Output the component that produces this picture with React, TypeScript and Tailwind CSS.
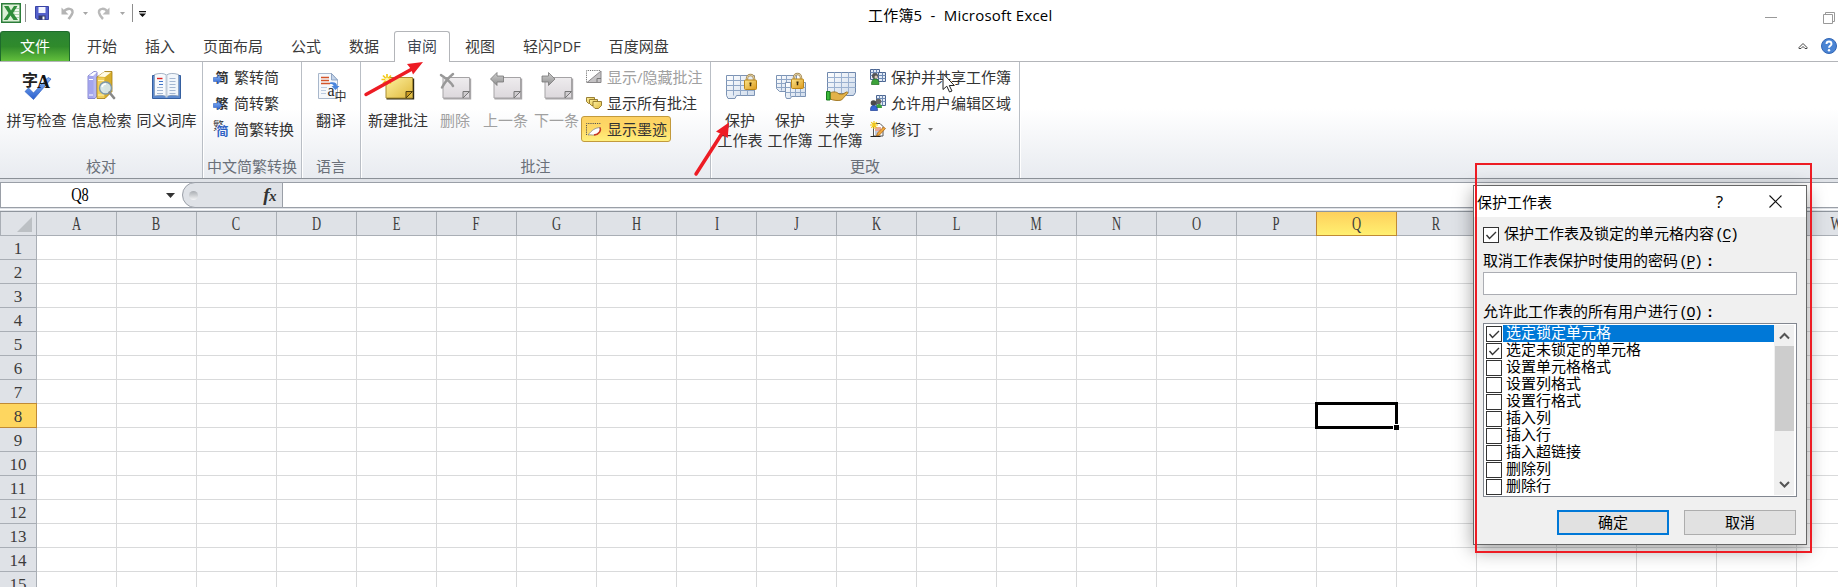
import React from "react";

type Kids = { children?: React.ReactNode };

const ui = "font-['Open_Sans','Noto_Sans_CJK_SC',sans-serif]";
const song = "font-['Liberation_Serif','Noto_Sans_CJK_SC',serif]";

const Big = ({ children }: Kids) => (
  <svg width="32" height="32" viewBox="0 0 32 32" className="block shrink-0 overflow-visible">
    {children}
  </svg>
);
const Small = ({ children }: Kids) => (
  <svg width="16" height="16" viewBox="0 0 16 16" className="block shrink-0 overflow-visible">
    {children}
  </svg>
);

const Defs = () => (
  <svg width="0" height="0" className="absolute">
    <defs>
      <linearGradient id="gBlue" x1="0" y1="0" x2="0" y2="1">
        <stop offset="0" stopColor="#8ab8f5" />
        <stop offset="1" stopColor="#2a5fce" />
      </linearGradient>
      <linearGradient id="gNote" x1="0" y1="0" x2="1" y2="1">
        <stop offset="0" stopColor="#fdf0a0" />
        <stop offset="1" stopColor="#dfb93c" />
      </linearGradient>
      <linearGradient id="gGray" x1="0" y1="0" x2="0" y2="1">
        <stop offset="0" stopColor="#eeecee" />
        <stop offset="1" stopColor="#dcd8dc" />
      </linearGradient>
      <linearGradient id="gArrow" x1="0" y1="0" x2="0" y2="1">
        <stop offset="0" stopColor="#cfcfcf" />
        <stop offset="1" stopColor="#8e8e8e" />
      </linearGradient>
      <linearGradient id="gLock" x1="0" y1="0" x2="1" y2="1">
        <stop offset="0" stopColor="#fbe48a" />
        <stop offset="1" stopColor="#dc9a1c" />
      </linearGradient>
      <linearGradient id="gSheet" x1="0" y1="0" x2="1" y2="1">
        <stop offset="0" stopColor="#ffffff" />
        <stop offset="1" stopColor="#ccd9ea" />
      </linearGradient>
    </defs>
  </svg>
);

const SpellIcon = () => (
  <Big>
    <path d="M4 21.500 7.500 18l5 5L27 7.500l3 1.500L12.500 29.500z" fill="url(#gBlue)" stroke="#2f62c4" strokeWidth=".7" />
    <text x="1" y="15.500" fontSize="16" fontWeight="700" fill="#222" fontFamily="Noto Sans CJK SC">字</text>
    <text x="16" y="17.500" fontSize="18" fontWeight="700" fill="#111" fontFamily="Liberation Serif">A</text>
  </Big>
);

const ResearchIcon = () => (
  <Big>
    <path d="M2 6 8 1.500l3 .5v24l-2 2.500H2z" fill="#b6b8f0" stroke="#6e70c4" strokeWidth=".8" />
    <path d="M2.500 6h5v22h-5z" fill="#a3a5ee" />
    <path d="M3 9.500h4M3 25h4" stroke="#fff" strokeWidth="1.200" />
    <path d="M3 5.500 8 2l3 .3L7 6z" fill="#fff" />
    <path d="M11 7 19 1.500h7v20L19 28.500h-8z" fill="#d8ae2c" stroke="#a37b13" strokeWidth=".8" />
    <path d="M11.500 7.500h7v20.500h-7z" fill="#f0cf5c" />
    <path d="m12 6.500 6-4.500 7 .3-6 4.700z" fill="#fffbe5" />
    <path d="M12 10.500h6M12 25h6" stroke="#fff1ae" strokeWidth="1" />
    <circle cx="19.500" cy="18" r="6" fill="#d5ecfb" fillOpacity=".88" stroke="#7d98ab" strokeWidth="1.400" />
    <path d="M16 17a4 4 0 0 1 4-3" stroke="#fff" fill="none" strokeWidth="1.500" />
    <path d="m23.500 22.500 4.500 5.500" stroke="#888" strokeWidth="2.600" strokeLinecap="round" />
  </Big>
);

const BookIcon = () => (
  <Big>
    <path d="M1.500 5.500h28v23h-28z" fill="#5c8ad0" stroke="#355f9f" />
    <path d="M3.500 4.500c5-1.500 9-1.500 12 .5v21.500c-4-1.500-7-1.500-12-.5z" fill="#f7fafd" stroke="#7f93ad" strokeWidth=".7" />
    <path d="M27.500 4.500c-5-1.500-9-1.500-12 .5v21.500c4-1.500 7-1.500 12-.5z" fill="#f1f6fb" stroke="#7f93ad" strokeWidth=".7" />
    <path d="M14.500 5h2v22.500h-2z" fill="#c0ccd9" />
    <path d="M6 8.500h5.500" stroke="#d22" strokeWidth="1.400" />
    <path d="M8 11.500h4M8 14.500h4" stroke="#3f74c9" strokeWidth="1.200" />
    <path d="M6 17.500h6M6 20.500h6M6 23.500h6M18.500 8.500h6M18.500 11.500h6M18.500 14.500h6M18.500 17.500h6M18.500 20.500h6M18.500 23.500h6" stroke="#a4b7d1" strokeWidth="1" />
  </Big>
);

const TranslateIcon = () => (
  <Big>
    <path d="M3.500 3.500h13l6 6.500v18.500h-19z" fill="#f5f8fc" stroke="#a8b7cb" />
    <path d="M16.500 3.500v6.500h6z" fill="#c5d5ea" stroke="#7f97ba" strokeWidth=".8" />
    <path d="M6 7.500h8M6 10.500h8M6 13.500h9" stroke="#d4542a" strokeWidth="1.300" />
    <path d="M6 17.500h6M6 20.500h5M6 23.500h5" stroke="#bccbe0" />
    <path d="M15 12.500c5-1 7 1 7 3.500h2.500l-4 4L16.500 16h2c0-1.500-1-2-3.500-2z" fill="#4a86dd" />
    <text x="12.500" y="26" fontSize="16" fill="#222" fontFamily="Liberation Serif">a</text>
    <text x="19.500" y="31" fontSize="12" fill="#333" fontFamily="Noto Sans CJK SC">中</text>
  </Big>
);

const NoteIcon = ({ kind }: { kind: "new" | "delete" | "prev" | "next" }) => {
  const fresh = kind === "new";
  return (
    <Big>
      <g transform="translate(1.500 0)">
        <path d="M3 28.800h27V8.500" fill="none" stroke={fresh ? "#2f2a14" : "#a8a6a8"} strokeWidth="1.400" />
        <path d="M2.500 7.500h26.500v20.500H2.500z" fill={fresh ? "url(#gNote)" : "url(#gGray)"} stroke={fresh ? "#a98d33" : "#a5a3a5"} />
        <path d="M22.500 28v-6.500H29z" fill={fresh ? "#c99b22" : "#cfcccf"} stroke={fresh ? "#4d3e10" : "#777"} strokeWidth="1" />
      </g>
      {fresh && (
        <g stroke="#f3c919" strokeWidth="1.700">
          <path d="M5 4v11M-.5 9.500h11M1 5.500l8 8M9 5.500l-8 8" />
          <circle cx="5" cy="9.500" r="2" fill="#fff6a0" stroke="none" />
        </g>
      )}
      {kind === "delete" && (
        <path d="M2 5c4 3 9 6 12 11M14 4C9 8 6 12 3 17.500" stroke="#999" strokeWidth="2.500" fill="none" strokeLinecap="round" />
      )}
      {kind === "prev" && <path d="M.5 9 7 2.500v3.500h6.500v6H7v3.500z" fill="url(#gArrow)" stroke="#777" strokeWidth=".8" />}
      {kind === "next" && <path d="M14 9 7.500 2.500v3.500H1v6h6.500v3.500z" fill="url(#gArrow)" stroke="#777" strokeWidth=".8" />}
    </Big>
  );
};

const Lock = ({ x, y }: { x: number; y: number }) => (
  <g transform={`translate(${x} ${y})`}>
    <path d="M3 7V4.500a3.500 3.500 0 0 1 7 0V7" fill="none" stroke="#a58a55" strokeWidth="2.400" />
    <path d="M3 7V4.500a3.500 3.500 0 0 1 7 0V7" fill="none" stroke="#e9d9ae" strokeWidth=".9" />
    <rect x=".5" y="6" width="12" height="9.500" rx="1" fill="url(#gLock)" stroke="#bb8618" />
    <path d="M6.500 8.800v3.500M5.500 9.300h2" stroke="#3a2a08" strokeWidth="1.500" />
  </g>
);

const ProtectSheetIcon = () => (
  <Big>
    <path d="M2.500 5.500h28v20h-18l-1.500 3H4l-1.500-3z" fill="url(#gSheet)" stroke="#7c93b4" />
    <path d="M2.500 10.500h28M2.500 15.500h28M2.500 20.500h28M9.500 5.500v20M16.500 5.500v20M23.500 5.500v20" stroke="#8fa6c6" fill="none" />
    <Lock x={20} y={4} />
  </Big>
);

const ProtectBookIcon = () => (
  <Big>
    <path d="M2.500 5.500h20v16h-17l-3-3z" fill="url(#gSheet)" stroke="#7c93b4" />
    <path d="M2.500 9.500h20M2.500 13.500h20M2.500 17.500h20M7.500 5.500v15M12.500 5.500v15" stroke="#8fa6c6" />
    <path d="M11.500 12.500h20v14h-14l-1 2h-4l-1-2z" fill="url(#gSheet)" stroke="#7c93b4" />
    <path d="M11.500 17.500h20M11.500 22.500h20M16.500 12.500v14M21.500 12.500v14M26.500 12.500v14" stroke="#8fa6c6" />
    <Lock x={17} y={3} />
  </Big>
);

const ShareBookIcon = () => (
  <Big>
    <path d="M3.500 2.500h28v20l-2 3h-7l-1-2h-18z" fill="url(#gSheet)" stroke="#6f88ad" />
    <path d="M3.500 7.500h28M3.500 12.500h28M3.500 17.500h28M10.500 2.500v21M17.500 2.500v21M24.500 2.500v21" stroke="#9bb1d0" />
    <path d="M6 23c4-2 7-1 9 1h4l3.500-2c1-.3 2 .7 1 1.500L17.500 30c-3 1-8 .5-11.500-1z" fill="#e3b24a" stroke="#9c701a" strokeWidth=".9" />
    <path d="M2.500 21.500h3.500v8.500H2.500z" fill="#3db83a" stroke="#167a1c" />
  </Big>
);

const ConvIcon = ({ ch }: { ch: string }) => (
  <Small>
    <text x="2.500" y="12.500" fontSize="13" fontWeight="700" fill="#333" fontFamily="Noto Sans CJK SC">{ch}</text>
    <path d="M.5 8.500h4V6l4.500 4.500L4.500 15v-2.500h-4z" fill="url(#gBlue)" stroke="#2f62c4" strokeWidth=".6" />
  </Small>
);
const ConvBothIcon = () => (
  <Small>
    <text x="0" y="8.500" fontSize="11" fill="#333" fontFamily="Noto Sans CJK SC">繁</text>
    <text x="3.500" y="15" fontSize="12" fontWeight="700" fill="#2f62c4" stroke="#f6f8fb" strokeWidth="1.500" paintOrder="stroke" fontFamily="Noto Sans CJK SC">简</text>
  </Small>
);
const ShowHideIcon = () => (
  <Small>
    <path d="M.5 13.500v-12h14" fill="none" stroke="#777" strokeDasharray="1.200 1" />
    <path d="M1 13.500h14V2z" fill="#c4c2c4" stroke="#8a888a" />
    <path d="M11 13v-3.500h4" fill="none" stroke="#777" />
  </Small>
);
const ShowAllIcon = () => (
  <Small>
    <g fill="url(#gNote)" stroke="#8d7326" strokeWidth=".9">
      <path d="M.5 2.500h8v6h-6l-2-2z" />
      <path d="M3.500 4.500h8v6h-6l-2-2z" />
      <path d="M7 6.500h8.500v4l-3 3H9l-2-2z" />
    </g>
  </Small>
);
const InkIcon = () => (
  <Small>
    <path d="M.5 14V2.500H15" fill="none" stroke="#555" strokeDasharray="1.200 1" />
    <path d="M2 14c4-5 7-7 12-7.500 1.500 3-1 7-5.500 7.500C6 14.300 4 13.500 2 14z" fill="#fff" stroke="#888" strokeWidth=".8" />
    <path d="M14 6.500c1.500 3-1 7.200-6 7.500" fill="none" stroke="#c83a22" strokeWidth="1.600" />
  </Small>
);
const MiniGrid = ({ x }: { x: number }) => (
  <g>
    <path d={`M${x}.5 .5h9v10h-9z`} fill="#e4ecf7" stroke="#4b6591" />
    <path d={`M${x}.5 3.500h9M${x}.5 6.500h9M${x + 3}.5 .5v10M${x + 6}.5 .5v10`} stroke="#6f8ab3" />
  </g>
);
const ShareProtectIcon = () => (
  <Small>
    <MiniGrid x={0} />
    <path d="M8.500 3.500h7v9h-7z" fill="#e4ecf7" stroke="#4b6591" />
    <path d="M8.500 6.500h7M8.500 9.500h7M12.500 3.500v9" stroke="#6f8ab3" />
    <circle cx="5" cy="7" r="3" fill="#555" />
    <path d="M1.500 15.500c0-4 1.500-5.500 4-5.500s3.500 2 3.500 5.500z" fill="#3da23a" stroke="#1c6c20" strokeWidth=".7" />
    <circle cx="6" cy="8" r="1.500" fill="#d8c9b5" />
  </Small>
);
const UserRangeIcon = () => (
  <Small>
    <MiniGrid x={6} />
    <circle cx="8.500" cy="6.500" r="2.800" fill="#666" />
    <path d="M6 13c0-3 1-4 3-4s3 1.500 3 4z" fill="#3da23a" />
    <circle cx="3.500" cy="8" r="2.800" fill="#4a4a4a" />
    <path d="M.5 15.500c0-4 1-5 3.500-5s3.500 2 3.500 5z" fill="#3667d6" stroke="#1d3d94" strokeWidth=".7" />
  </Small>
);
const TrackIcon = () => (
  <Small>
    <path d="M3.500 2.500h6.500l3 3v9.500h-9.500z" fill="#fff" stroke="#555" />
    <path d="M5 7h6M5 9h6" stroke="#d4542a" />
    <path d="M5 11h4M5 13h4" stroke="#7a93bd" />
    <path d="M.5 15.500h10" stroke="#222" />
    <path d="m15.500 7.500-6 6.500-3 1 1-3 6-6z" fill="#f0a83c" stroke="#a35f12" strokeWidth=".7" />
    <path d="M4 0v8M0 4h8M1.200 1.200l5.600 5.600M6.800 1.200 1.200 6.800" stroke="#f3c919" strokeWidth="1.200" />
  </Small>
);

const Caret = ({ className = "" }: { className?: string }) => (
  <svg width="5" height="3" viewBox="0 0 5 3" className={`block shrink-0 ${className}`}>
    <path d="M0 0h5L2.500 3z" fill="currentColor" />
  </svg>
);

const TitleBar = () => (
  <header className="relative flex h-[31px] items-start">
    <div className="flex items-center pt-[3px]">
      <svg width="20" height="20" viewBox="0 0 20 20" className="ml-px">
        <rect x=".75" y=".75" width="18.500" height="18.500" fill="#dcefd6" stroke="#2c7d3a" strokeWidth="1.500" />
        <path d="M14 3h4v14h-4z" fill="#f4faf2" />
        <path d="M13 5.500h5M13 8.500h5M13 11.500h5M13 14.500h5" stroke="#9ccb9c" strokeWidth=".8" />
        <path d="M3 3h4.500l2.500 4.500L13 3h3.500L12 10l5 7h-4.500l-3-4.500L6.500 17H2.500l5-7z" fill="#2f8d3b" />
      </svg>
      <div className="ml-1 h-[18px] w-px bg-[#8d8d8d]" />
      <svg width="14" height="14" viewBox="0 0 14 14" className="ml-[9px]">
        <path d="M.5 .5h13v13H2l-1.500-1.500z" fill="#5460cc" stroke="#3a44a4" />
        <path d="M3.500 1h7v6h-7z" fill="#f4f6ff" />
        <path d="M3.500 9.500h7v4h-7z" fill="#333a66" />
        <path d="M7.500 10.500h2v3h-2z" fill="#fff" />
      </svg>
      <svg width="14" height="14" viewBox="0 0 14 14" className="ml-3">
        <path d="M2.500 6C6 1.500 12 2 11.500 6.500 11 9.500 9 11 7.500 13" fill="none" stroke="#b4b4b4" strokeWidth="2.500" />
        <path d="M.5 1.500v7h7z" fill="#b4b4b4" />
      </svg>
      <Caret className="ml-2 text-[#a6a6a6]" />
      <svg width="14" height="14" viewBox="0 0 14 14" className="ml-[9px]">
        <path d="M10.500 6C8 1.500 1.500 2 2 6.500 2.500 9.500 4 11 6 13" fill="none" stroke="#b9b9b9" strokeWidth="2.500" />
        <path d="M12.500 1.500v7h-7z" fill="#b9b9b9" />
      </svg>
      <Caret className="ml-[9px] text-[#a6a6a6]" />
      <div className="ml-[7px] h-[18px] w-px bg-[#8d8d8d]" />
      <svg width="7" height="6" viewBox="0 0 7 6" className="ml-[6px] mt-px">
        <path d="M0 0h7v1.200H0zM0 2.500h7L3.500 6z" fill="#111" />
      </svg>
    </div>
    <h1 className="ml-[722px] whitespace-pre pt-[3px] text-[15px] leading-6 tracking-[0.2px] text-black">工作簿5  -  Microsoft Excel</h1>
    <svg width="72" height="14" viewBox="0 0 72 14" className="absolute right-[2px] top-[11px]">
      <path d="M1 6.500h12" stroke="#999" />
      <path d="M59.500 3.500h9v9h-9zM61.500 3V1.500h9v9H69" fill="none" stroke="#999" />
    </svg>
  </header>
);

const tabs = ["开始", "插入", "页面布局", "公式", "数据", "审阅", "视图", "轻闪PDF", "百度网盘"];

const TabStrip = () => (
  <nav className="flex h-[31px] border-b border-[#b3b5b9] text-[15px] leading-[30px] text-[#3b3b3b]">
    <div className="mr-[3px] h-[30px] w-[70px] rounded-t-[3px] border border-b-0 border-[#1e6b2c] bg-linear-to-b from-[#2b8433] via-[#2f8a2b] to-[#62bf3c] text-center leading-[29px] text-white">
      文件
    </div>
    {tabs.map((t) =>
      t === "审阅" ? (
        <div key={t} className="mx-px h-[31px] rounded-t-[3px] border border-b-0 border-[#b3b5b9] bg-white px-[12px] leading-[28px] text-[#3f4854]">
          {t}
        </div>
      ) : (
        <div key={t} className="whitespace-nowrap px-[14px]">
          {t}
        </div>
      ),
    )}
    <div className="ml-auto flex items-center gap-[13px] pr-px">
      <svg width="10" height="8" viewBox="0 0 10 8">
        <path d="M1 5.500 5 1.500l4 4v1H7L5 4.500l-2 2H1z" fill="#fff" stroke="#444" />
      </svg>
      <svg width="16" height="16" viewBox="0 0 16 16">
        <circle cx="8" cy="8" r="7.500" fill="#4a84d4" stroke="#3266b4" />
        <path d="M5.500 6c0-3.300 5-3.300 5 0 0 1.800-2.500 1.800-2.500 3.800" fill="none" stroke="#fff" strokeWidth="1.900" />
        <circle cx="8" cy="12.200" r="1.200" fill="#fff" />
      </svg>
    </div>
  </nav>
);

const Group = ({ label, className, children }: Kids & { label: string; className: string }) => (
  <section className={`flex shrink-0 flex-col border-r border-[#b9bec5] shadow-[1px_0_0_#fff] ${className}`}>
    <div className="flex h-[92px]">{children}</div>
    <div className="text-center leading-[24px] text-[#6a7079]">{label}</div>
  </section>
);

const BigButton = ({ icon, lines, className, off }: { icon: React.ReactNode; lines: string[]; className: string; off?: boolean }) => (
  <div className={`flex shrink-0 flex-col items-center pt-2 ${off ? "text-[#a0a0a0]" : ""} ${className}`}>
    {icon}
    <div className="mt-2 text-center leading-5">
      {lines.map((l) => (
        <div key={l} className="whitespace-nowrap">{l}</div>
      ))}
    </div>
  </div>
);

const SmallButton = ({ icon, label, off, on, caret }: { icon: React.ReactNode; label: string; off?: boolean; on?: boolean; caret?: boolean }) => (
  <div
    className={`flex h-[26px] w-max items-center gap-[5px] whitespace-nowrap rounded-[3px] border pl-1 pr-[3px] leading-6 ${
      on ? "border-[#c29a3c] bg-linear-to-b from-[#fdd163] via-[#fed966] to-[#fff07e]" : "border-transparent"
    } ${off ? "text-[#a0a0a0]" : ""}`}
  >
    {icon}
    <span>{label}</span>
    {caret && <Caret className="ml-[2px] text-[#666]" />}
  </div>
);

const Ribbon = () => (
  <div className="flex h-[117px] border-b border-[#8b9097] bg-linear-to-b from-white from-40% to-[#e8ebf0] text-[15px] text-[#333]">
    <Group label="校对" className="w-[203px]">
      <BigButton className="ml-[4px] w-[65px]" icon={<SpellIcon />} lines={["拼写检查"]} />
      <BigButton className="w-[65px]" icon={<ResearchIcon />} lines={["信息检索"]} />
      <BigButton className="w-[65px]" icon={<BookIcon />} lines={["同义词库"]} />
    </Group>
    <Group label="中文简繁转换" className="w-[99px]">
      <div className="ml-[5px] pt-[2px]">
        <SmallButton icon={<ConvIcon ch="简" />} label="繁转简" />
        <SmallButton icon={<ConvIcon ch="繁" />} label="简转繁" />
        <SmallButton icon={<ConvBothIcon />} label="简繁转换" />
      </div>
    </Group>
    <Group label="语言" className="w-[59px]">
      <BigButton className="w-[58px]" icon={<TranslateIcon />} lines={["翻译"]} />
    </Group>
    <Group label="批注" className="w-[350px]">
      <BigButton className="ml-1 w-[66px]" icon={<NoteIcon kind="new" />} lines={["新建批注"]} />
      <BigButton className="w-[48px]" off icon={<NoteIcon kind="delete" />} lines={["删除"]} />
      <BigButton className="w-[53px]" off icon={<NoteIcon kind="prev" />} lines={["上一条"]} />
      <BigButton className="w-[49px]" off icon={<NoteIcon kind="next" />} lines={["下一条"]} />
      <div className="pt-[2px]">
        <SmallButton off icon={<ShowHideIcon />} label="显示/隐藏批注" />
        <SmallButton icon={<ShowAllIcon />} label="显示所有批注" />
        <SmallButton on icon={<InkIcon />} label="显示墨迹" />
      </div>
    </Group>
    <Group label="更改" className="w-[309px]">
      <BigButton className="ml-1 w-[50px]" icon={<ProtectSheetIcon />} lines={["保护", "工作表"]} />
      <BigButton className="w-[50px]" icon={<ProtectBookIcon />} lines={["保护", "工作簿"]} />
      <BigButton className="w-[50px]" icon={<ShareBookIcon />} lines={["共享", "工作簿"]} />
      <div className="pt-[2px]">
        <SmallButton icon={<ShareProtectIcon />} label="保护并共享工作簿" />
        <SmallButton icon={<UserRangeIcon />} label="允许用户编辑区域" />
        <SmallButton caret icon={<TrackIcon />} label="修订" />
      </div>
    </Group>
  </div>
);

const FormulaBar = () => (
  <div className="h-8 bg-[#dfe2e7] pt-[3px]">
    <div className={`flex h-[26px] border border-r-0 border-[#9a9fa7] bg-white ${song}`}>
      <div className="flex w-[181px] items-center">
        <span className="w-[158px] text-center text-[18px] leading-6 text-black">
          <span className="inline-block scale-x-80">Q8</span>
        </span>
        <svg width="9" height="5" viewBox="0 0 9 5" className="ml-[7px]">
          <path d="M0 0h9L4.500 5z" fill="#333" />
        </svg>
      </div>
      <div className="-my-px flex h-[26px] w-[101px] items-center justify-between rounded-l-full border border-[#9a9fa7] bg-[#dfe2e7] pl-[6px] pr-[6px]">
        <div className="h-[9px] w-[9px] rounded-full bg-linear-to-b from-[#a9adb2] to-[#f4f5f6]" />
        <span className="text-[19px] font-bold italic leading-6 tracking-[-0.5px] text-[#333]">
          f<span className="text-[15px]">x</span>
        </span>
      </div>
    </div>
    <div className="mt-px h-px bg-white" />
  </div>
);

const columns = "ABCDEFGHIJKLMNOPQRSTUVW".split("");
const rows = Array.from({ length: 15 }, (_, i) => i + 1);

const Sheet = () => (
  <main className={`text-[17px] text-[#3c3c3c] ${song}`}>
    <div className="flex h-[25px] w-[1877px] border-t border-[#8f959d]">
      <div className="flex w-[37px] items-end justify-end border-b border-l border-r border-[#a9aeb5] bg-[#dfe2e7] pb-[3px] pr-1">
        <svg width="15" height="15" viewBox="0 0 15 15">
          <path d="M15 0v15H0z" fill="#bcc0c4" />
        </svg>
      </div>
      {columns.map((c) => (
        <div
          key={c}
          className={`h-6 w-20 border-b border-r text-center text-[18px] leading-[25px] ${
            c === "Q"
              ? "border-[#c08a35] bg-linear-to-b from-[#fed05c] to-[#fff071] shadow-[-1px_0_0_#c08a35]"
              : "border-[#a9aeb5] bg-[#dfe2e7]"
          }`}
        >
          <span className="inline-block scale-x-70">{c}</span>
        </div>
      ))}
    </div>
    {rows.map((r) => (
      <div key={r} className="flex h-6 w-[1877px]">
        <div
          className={`w-[37px] border-b border-r text-center leading-[26px] ${
            r === 8 ? "border-[#c08a35] bg-[#fed65f] shadow-[0_-1px_0_#c08a35]" : "border-[#a9aeb5] bg-[#dfe2e7]"
          }`}
        >
          {r}
        </div>
        {columns.map((c) => (
          <div key={c} className="relative w-20 border-b border-r border-[#d9dadb]">
            {r === 8 && c === "Q" && (
              <div className="absolute -left-[2px] -top-[2px] z-10 h-[27px] w-[83px] border-[3px] border-black">
                <div className="absolute -bottom-[4px] -right-[4px] h-[6px] w-[6px] border-l border-t border-white bg-black" />
              </div>
            )}
          </div>
        ))}
      </div>
    ))}
  </main>
);

const Check = ({ on }: { on?: boolean }) => (
  <span className="block h-4 w-4 shrink-0 border border-[#333] bg-white">
    {on && (
      <svg width="14" height="14" viewBox="0 0 14 14" className="block">
        <path d="m2.500 7 3 3.500L12 4" fill="none" stroke="#333" strokeWidth="1.400" />
      </svg>
    )}
  </span>
);

const Key = ({ k, colon }: { k: string; colon?: boolean }) => (
  <span className="ml-px font-['Liberation_Mono',monospace] tracking-[-1.500px]">
    (<u className="underline-offset-2">{k}</u>){colon && <b className="ml-1">:</b>}
  </span>
);

const permissions = ["选定锁定单元格", "选定未锁定的单元格", "设置单元格格式", "设置列格式", "设置行格式", "插入列", "插入行", "插入超链接", "删除列", "删除行"];

const ProtectDialog = () => (
  <div className="absolute left-[1473px] top-[185px] z-20 flex h-[360px] w-[334px] flex-col border border-[#666] bg-[#f0f0f0] text-[15px] text-black shadow-[0_5px_18px_rgba(0,0,0,0.38)]">
    <div className="flex h-[31px] shrink-0 items-center bg-white pl-[3px]">
      <span className="leading-[30px]">保护工作表</span>
      <span className="ml-auto mr-[46px] text-[17px] leading-[30px]">?</span>
      <svg width="13" height="13" viewBox="0 0 13 13" className="mr-6">
        <path d="m.5.5 12 12M12.500.5l-12 12" stroke="#111" strokeWidth="1.100" />
      </svg>
    </div>
    <div className="flex flex-col px-[9px] font-['Liberation_Sans','Noto_Sans_CJK_SC',sans-serif]">
      <div className="mt-[9px] flex h-[18px] items-center gap-[5px] whitespace-nowrap leading-[18px]">
        <Check on />
        <span>保护工作表及锁定的单元格内容<Key k="C" /></span>
      </div>
      <div className="mt-[8px] h-[18px] whitespace-nowrap leading-[18px]">取消工作表保护时使用的密码<Key k="P" colon /></div>
      <div className="mt-[2px] h-[23px] border border-[#abadb3] bg-white" />
      <div className="mt-[8px] h-[18px] whitespace-nowrap leading-[18px]">允许此工作表的所有用户进行<Key k="O" colon /></div>
      <div className="mt-[2px] flex h-[174px] border border-[#828790] bg-white p-px">
        <ul className="min-w-0 flex-1 pl-px">
          {permissions.map((p, i) => (
            <li key={p} className="flex h-[17px] items-center gap-px">
              <Check on={i < 2} />
              <span className={`h-[17px] flex-1 whitespace-nowrap pl-[3px] leading-[16px] ${i === 0 ? "bg-[#0078d7] text-white" : ""}`}>{p}</span>
            </li>
          ))}
        </ul>
        <div className="mr-px flex w-[20px] flex-col items-center bg-[#f0f0f0] pl-px">
          <svg width="11" height="21" viewBox="0 0 11 21">
            <path d="m1 13.500 4.500-4.500 4.500 4.500" fill="none" stroke="#555" strokeWidth="2" />
          </svg>
          <div className="h-[85px] w-full bg-[#cdcdcd]" />
          <svg width="11" height="20" viewBox="0 0 11 20" className="mt-auto">
            <path d="m1 7 4.500 4.500L10 7" fill="none" stroke="#555" strokeWidth="2" />
          </svg>
        </div>
      </div>
      <div className="mt-[13px] flex justify-end gap-[15px] pr-px">
        <button className="h-[25px] w-[112px] border-2 border-[#0078d7] bg-[#e1e1e1] leading-[22px]">确定</button>
        <button className="h-[25px] w-[112px] border border-[#adadad] bg-[#e1e1e1] leading-[24px]">取消</button>
      </div>
    </div>
  </div>
);

const Annotations = () => (
  <>
    <div className="pointer-events-none absolute left-[1475px] top-[163px] z-30 h-[390px] w-[337px] border-2 border-[#ed1c24]" />
    <svg width="1000" height="180" viewBox="0 0 1000 180" className="pointer-events-none absolute left-0 top-0 z-30">
      <g stroke="#ed1c24" strokeWidth="3.500" strokeLinecap="round">
        <path d="M366 94.500 412 69" />
        <path d="M696 174l25-39" />
      </g>
      <path d="M423 62 407 64l4 5 2 5.500z" fill="#ed1c24" />
      <path d="M729 122.500 716 131.500l5 2.500 6.700 4z" fill="#ed1c24" />
      <path d="M943 73.500v16l3.800-3.300 2.700 5.800 2.500-1-2.700-5.500h5z" fill="#fff" stroke="#222" strokeWidth="1" />
    </svg>
  </>
);

export default function App() {
  return (
    <div className={`relative h-[587px] w-[1838px] overflow-hidden bg-white ${ui}`}>
      <Defs />
      <TitleBar />
      <TabStrip />
      <Ribbon />
      <FormulaBar />
      <Sheet />
      <ProtectDialog />
      <Annotations />
    </div>
  );
}
